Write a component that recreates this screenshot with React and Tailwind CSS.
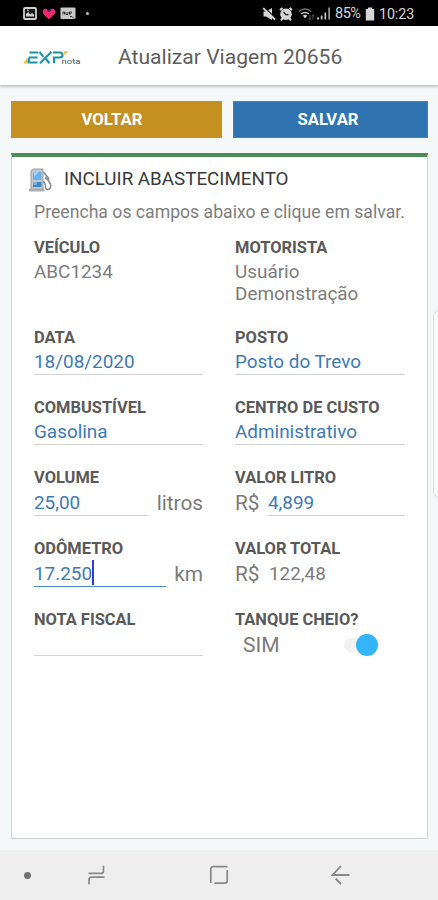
import React, { useState } from 'react';
import clsx from 'clsx';

function StatusBar() {
  return (
    <div className="h-[26px] bg-black flex items-center text-[#d6d6d6] shrink-0">
      <div className="flex items-center pl-[23px] pt-px">
        {/* Gallery */}
        <svg width="14" height="13" viewBox="0 0 14 13">
          <rect x="1" y="1" width="12" height="11" rx="1" fill="#151515" stroke="#d0d0d0" strokeWidth="1.8" />
          <path d="M3 9.5V7l2.2-2 2 2.5L9 6l2 1.5v2z" fill="#d0d0d0" />
          <path d="M4 3h1v1.5" stroke="#d0d0d0" fill="none" />
        </svg>
        <svg className="ml-[5px]" width="14" height="12" viewBox="0 0 14 12">
          <path d="M7 11.5 1 5.5Q0 3 1.6 1.6 3.8 0 5.4 1.6L7 3 8.6 1.6Q10.2 0 12.4 1.6 14 3 13 5.5Z" fill="#f0286a" />
          <path d="M5.5 1 7 3.2 8.5 1 9 2.5 7 4.5 5 2.5z" fill="#3a1a8a" />
        </svg>
        <svg className="ml-[4px]" width="16" height="13" viewBox="0 0 16 13">
          <rect x="0.5" y="0.5" width="15" height="11.5" rx="1" fill="#c9c9c9" />
          <path d="M3 7.5V5h1.5v2.5M6 5v2.5h2V5M9.5 7.5V5h2l-1 2.5M10 9.5h2l2 2" stroke="#333" fill="none" strokeWidth="1" />
        </svg>
        <span className="ml-[10px] w-[3px] h-[3px] rounded-full bg-[#bdbdbd]" />
      </div>

      <div className="flex items-center ml-auto pr-[24px] pt-px">
        <svg width="14" height="14" viewBox="0 0 14 14">
          <path d="M1.5 4.5H4L10 1v12L4 9.5H1.5z" fill="#d6d6d6" />
          <path d="M3 1l11 10.5" stroke="#000" strokeWidth="1.2" />
          <path d="M1.2 1.2 13 12.5" stroke="#d6d6d6" strokeWidth="1.8" />
        </svg>
        <svg className="ml-[3px]" width="14" height="14" viewBox="0 0 14 14">
          <path d="M1 3 3.5 1M13 3 10.5 1M2 13.2l2-2.2M12 13.2 10 11" stroke="#d6d6d6" strokeWidth="2.2" />
          <circle cx="7" cy="7.2" r="5.8" fill="#d6d6d6" />
          <path d="M4.5 5 7 7.7h2.5" stroke="#111" strokeWidth="1.3" fill="none" />
        </svg>
        <svg className="ml-[5px]" width="17" height="14" viewBox="0 0 17 14">
          <path d="M0.8 4.5Q7 -0.5 13.2 4.5" stroke="#777" strokeWidth="1.4" fill="none" />
          <path d="M3 7Q7 3.8 11 7" stroke="#c8c8c8" strokeWidth="1.5" fill="none" />
          <path d="M4.8 8.5Q7 7 9.2 8.5L7 11.5z" fill="#d6d6d6" />
          <path d="M12 8v4.5M10.8 11 12 12.7 13.2 11M15 12.5V8M13.9 9.5 15 7.8 16.1 9.5" stroke="#555" fill="none" />
        </svg>
        <svg className="ml-[2px]" width="14" height="13" viewBox="0 0 14 13">
          <path d="M0 12.5v-2h2v2zM3.8 12.5v-4h1.7v4zM7.5 12.5v-7h1.7v7z" fill="#c4c4c4" />
          <path d="M11.3 12.5V.5H13v12z" fill="#999" />
        </svg>
        <span className="ml-[4px] text-[14.5px] leading-[16px] w-[26px] whitespace-nowrap tracking-[-0.5px]">85%</span>
        <svg className="ml-[4px]" width="10" height="14" viewBox="0 0 10 14">
          <path d="M3 .5h4V2h2.2v11.5H.8V2H3z" fill="#d6d6d6" />
        </svg>
        <span className="ml-[4px] text-[14.3px] leading-[16px] w-[35px] whitespace-nowrap tracking-[-0.1px]">10:23</span>
      </div>
    </div>
  );
}

function Logo() {
  return (
    <svg width="60" height="16" viewBox="0 0 60 16" fill="none">
      <path d="M0 13.5 4.5 8v5.5z" fill="#e9b93c" />
      <g stroke="#1693a5" strokeWidth="2.1">
        <path d="M6.5 2.5H15M6 7.5h8.500M14.500 12.500H5.800v-5" />
        <path d="m16.5 1.8 4 5M28.5 1.8 17 13.2M22.5 8.5l4 4.700" />
        <path d="M30 2.500h7q2.500 0 2.500 2.500t-2.500 2.500h-6v5.700" />
      </g>
      <path d="m41 1.500 4.500-.5-4 4z" fill="#e9b93c" />
      <text x="38.5" y="13.5" fill="#555" fontSize="8" fontFamily="Roboto, sans-serif" textLength="19" lengthAdjust="spacingAndGlyphs">nota</text>
    </svg>
  );
}

function FuelPump() {
  return (
    <svg width="24" height="24" viewBox="0 0 24 24" fill="none">
      <path d="M3 2.5 5.5 1H15v21H3z" fill="#c3c7ca" stroke="#9a9ea1" />
      <path d="M1 20.5h15.500v3H1z" fill="#a9adb0" />
      <rect x="5" y="4" width="8.5" height="8" rx="1" fill="#67b2ee" />
      <path d="M5.5 4.5h5l-4 4z" fill="#a8d6f7" />
      <rect x="5" y="14" width="8.5" height="5" fill="#3f87bd" />
      <path d="M5 14h4v3H5z" fill="#6db3df" />
      <path d="m15.5 4 5 6v3l2 3q1 5-2.500 5.500-3 .5-2.500-4.500l-2-4" stroke="#85898c" strokeWidth="1.5" />
      <path d="m17.5 8 3 2.500-1 2.500-2.500-2z" fill="#8d9194" />
    </svg>
  );
}

function Field({ label, children }) {
  return (
    <div>
      <div className="text-[16.45px] leading-[20px] h-[20px] font-bold text-[#595959] whitespace-nowrap">{label}</div>
      {children}
    </div>
  );
}

function Value({ children, focused, plain, className }) {
  return (
    <div
      className={clsx(
        'h-[24px] text-[18.9px] leading-[22px] whitespace-nowrap flex',
        plain ? 'text-[#7c7c7c]' : 'text-[#3d7ab5] border-b',
        !plain && (focused ? 'border-[#4a90cc]' : 'border-[#d3d3d3]'),
        className
      )}
    >
      {children}
    </div>
  );
}

function Unit({ children }) {
  return <span className="text-[20.8px] leading-[24px] text-[#7a7a7a] -mt-px">{children}</span>;
}

function NavBar() {
  return (
    <nav className="h-[50px] bg-[#eee] flex items-center shrink-0 pl-[24px]">
      <span className="w-[7px] h-[7px] rounded-full bg-[#707070]" />
      <svg className="ml-[56px]" width="19" height="20" viewBox="0 0 19 20" fill="none" stroke="#888" strokeWidth="1.7">
        <path d="M1.5 8.3h13q2 0 2-2V.8M17.5 12.2h-13q-2.500 0-2.500 2v5" />
      </svg>
      <svg className="ml-[103px]" width="20" height="20" viewBox="0 0 20 20" fill="none" stroke="#888" strokeWidth="1.7">
        <path d="M1.8 18V4q0-2.300 2.300-2.300h14.400M18.200 5v11q0 2.200-2.200 2.200H5.500" />
      </svg>
      <svg className="ml-[102px]" width="20" height="20" viewBox="0 0 20 20" fill="none" stroke="#888" strokeWidth="1.8">
        <path d="M10 1 1.5 10h17M4.5 13.5 10 19" />
      </svg>
    </nav>
  );
}

export default function App() {
  const [full, setFull] = useState(true);

  return (
    <div className="relative w-[438px] h-[900px] overflow-hidden flex flex-col bg-[#f5f8f8] font-[Roboto,sans-serif]">
      <StatusBar />

      <header className="h-[59px] bg-white flex items-center shrink-0 pl-[23px] shadow-[0_2px_2px_rgba(0,0,0,0.2)]">
        <div className="pt-1">
          <Logo />
        </div>
        <h1 className="ml-[35px] pt-[3px] text-[21.1px] leading-[24px] text-[#5e5e5e] whitespace-nowrap">Atualizar Viagem 20656</h1>
      </header>

      <main className="flex-1 flex flex-col pt-[16px] pl-[11px] pr-[10px] pb-[11px]">
        <div className="flex gap-[11px] h-[37px] mb-[15px] text-white font-bold text-[16.7px]">
          <button className="w-[211px] bg-[#c4901f] border border-[#b3924b] pt-px pr-[9px]">VOLTAR</button>
          <button className="flex-1 bg-[#2f74b1] border border-[#4a80ae] pt-px pr-[5px]">SALVAR</button>
        </div>

        <section className="flex-1 bg-white border border-[#ced5d5] border-t-4 border-t-[#4c8c55] pl-[22px] pr-[21px]">
          <div className="flex items-center h-[43px] -ml-[6px] pt-[2px]">
            <FuelPump />
            <h2 className="ml-[12px] -mt-[2px] text-[18.8px] leading-[24px] text-[#3a3a3a] whitespace-nowrap">INCLUIR ABASTECIMENTO</h2>
          </div>
          <p className="h-[38px] pt-px text-[17.65px] leading-[22px] text-[#7e7e7e] whitespace-nowrap">Preencha os campos abaixo e clique em salvar.</p>

          <div className="grid grid-cols-[169px_170px] gap-x-[32px] grid-rows-[90px_70px_70px_71px_71px_50px]">
            <Field label="VEÍCULO">
              <Value plain className="mt-[3px]">ABC1234</Value>
            </Field>
            <Field label="MOTORISTA">
              <div className="mt-[3px] text-[18.9px] leading-[22px] text-[#7c7c7c]">
                Usuário<br />Demonstração
              </div>
            </Field>

            <Field label="DATA">
              <Value className="mt-[3px]">18/08/2020</Value>
            </Field>
            <Field label="POSTO">
              <Value className="mt-[3px]">Posto do Trevo</Value>
            </Field>

            <Field label="COMBUSTÍVEL">
              <Value className="mt-[3px]">Gasolina</Value>
            </Field>
            <Field label="CENTRO DE CUSTO">
              <Value className="mt-[3px]">Administrativo</Value>
            </Field>

            <Field label="VOLUME">
              <div className="flex justify-between mt-[4px]">
                <Value className="w-[114px]">25,00</Value>
                <Unit>litros</Unit>
              </div>
            </Field>
            <Field label="VALOR LITRO">
              <div className="flex justify-between mt-[4px]">
                <Unit>R$</Unit>
                <Value className="w-[137px]">4,899</Value>
              </div>
            </Field>

            <Field label="ODÔMETRO">
              <div className="flex justify-between mt-[4px]">
                <Value focused className="w-[132px]">
                  17.250
                  <span className="w-[2px] h-[25px] -mt-[3px] bg-[#3038d8]" />
                </Value>
                <Unit>km</Unit>
              </div>
            </Field>
            <Field label="VALOR TOTAL">
              <div className="flex justify-between mt-[4px]">
                <Unit>R$</Unit>
                <Value plain className="w-[136px]">122,48</Value>
              </div>
            </Field>

            <Field label="NOTA FISCAL">
              <Value className="mt-[2px]" />
            </Field>
            <Field label="TANQUE CHEIO?">
              <div className="flex items-center mt-[3px] pl-[8px] h-[24px]">
                <span className="text-[21px] leading-[24px] text-[#7a7a7a] w-[101px]">{full ? 'SIM' : 'NÃO'}</span>
                <button
                  onClick={() => setFull(!full)}
                  className={clsx('w-[34px] h-[14px] rounded-full bg-[#f2f2f2] flex items-center', full && 'justify-end')}
                >
                  <span className="w-[22px] h-[22px] rounded-full bg-[#33b5fb] shrink-0" />
                </button>
              </div>
            </Field>
          </div>
        </section>
      </main>

      {/* Edge panel handle */}
      <div className="absolute left-[433px] top-[311px] w-[10px] h-[186px] rounded-[5px] bg-[#fafbfb] border border-[#dcdfdf]" />

      <NavBar />
    </div>
  );
}
